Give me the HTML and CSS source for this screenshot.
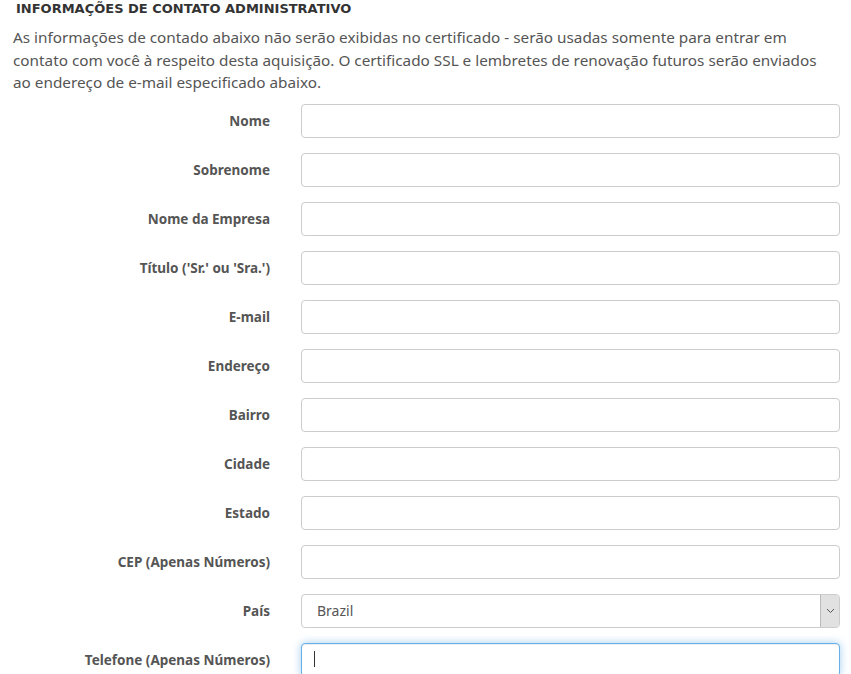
FILE: index.html
```html
<!DOCTYPE html>
<html lang="pt-BR">
<head>
    <meta charset="UTF-8">
    <meta name="viewport" content="width=device-width, initial-scale=1.0">
    <title>Informações de contato administrativo</title>
    <link rel="stylesheet" href="styles.css">
</head>
<body>
    <div class="container">
        <h3 class="section-title">Informações de contato administrativo</h3>
        <p class="section-info">As informações de contado abaixo não serão exibidas no certificado - serão usadas somente para entrar em contato com você à respeito desta aquisição. O certificado SSL e lembretes de renovação futuros serão enviados ao endereço de e-mail especificado abaixo.</p>

        <form class="contact-form">
            <div class="form-row">
                <label for="firstName">Nome</label>
                <input type="text" id="firstName" name="firstName">
            </div>
            <div class="form-row">
                <label for="lastName">Sobrenome</label>
                <input type="text" id="lastName" name="lastName">
            </div>
            <div class="form-row">
                <label for="company">Nome da Empresa</label>
                <input type="text" id="company" name="company">
            </div>
            <div class="form-row">
                <label for="title">Título ('Sr.' ou 'Sra.')</label>
                <input type="text" id="title" name="title">
            </div>
            <div class="form-row">
                <label for="email">E-mail</label>
                <input type="email" id="email" name="email">
            </div>
            <div class="form-row">
                <label for="address">Endereço</label>
                <input type="text" id="address" name="address">
            </div>
            <div class="form-row">
                <label for="district">Bairro</label>
                <input type="text" id="district" name="district">
            </div>
            <div class="form-row">
                <label for="city">Cidade</label>
                <input type="text" id="city" name="city">
            </div>
            <div class="form-row">
                <label for="state">Estado</label>
                <input type="text" id="state" name="state">
            </div>
            <div class="form-row">
                <label for="zip">CEP (Apenas Números)</label>
                <input type="text" id="zip" name="zip">
            </div>
            <div class="form-row">
                <label for="country">País</label>
                <div class="select-wrap">
                    <select id="country" name="country">
                        <option value="BR" selected>Brazil</option>
                    </select>
                    <span class="select-arrow">
                        <svg width="9" height="6" viewBox="0 0 9 6"><path d="M1 1l3.5 3.5L8 1" fill="none" stroke="#555" stroke-width="1"/></svg>
                    </span>
                </div>
            </div>
            <div class="form-row">
                <label for="phone">Telefone (Apenas Números)</label>
                <div class="input-wrap">
                    <input type="text" id="phone" name="phone" class="is-focused">
                    <span class="caret"></span>
                </div>
            </div>
        </form>
    </div>
</body>
</html>
```

FILE: styles.css
```css
* {
    margin: 0;
    padding: 0;
    box-sizing: border-box;
}

body {
    font-family: 'Noto Sans', 'Open Sans', sans-serif;
    background: #ffffff;
    color: #555555;
}

.container {
    padding: 0 11px 0 13px;
}

.section-title {
    margin: 0 0 9px 3px;
    font-family: 'DejaVu Sans', 'Noto Sans', sans-serif;
    font-size: 13px;
    line-height: 17px;
    font-weight: 700;
    text-transform: uppercase;
    color: #333333;
}

.section-info {
    padding-right: 14px;
    font-size: 15.3px;
    line-height: 22.5px;
    color: #555555;
    margin-bottom: 10px;
}

.form-row {
    display: flex;
    align-items: center;
    gap: 31px;
    margin-bottom: 15px;
}

.form-row label {
    width: 257px;
    flex-shrink: 0;
    text-align: right;
    font-size: 13.5px;
    font-weight: 700;
    color: #555555;
}

.form-row input,
.form-row select {
    width: 100%;
    height: 34px;
    padding: 6px 15px;
    border: 1px solid #cccccc;
    border-radius: 4px;
    background: #ffffff;
    font-family: inherit;
    font-size: 14px;
    color: #555555;
}

.form-row input:focus,
.form-row select:focus {
    outline: none;
}

.select-wrap,
.input-wrap {
    position: relative;
    flex: 1;
}

.form-row select {
    appearance: none;
    -webkit-appearance: none;
}

.select-arrow {
    position: absolute;
    top: 1px;
    right: 1px;
    width: 19px;
    height: 32px;
    display: flex;
    align-items: center;
    justify-content: center;
    background: #e1e1e1;
    border-left: 1px solid #bbbbbb;
    border-radius: 0 3px 3px 0;
    pointer-events: none;
}

.form-row input.is-focused {
    border-color: #66afe9;
    box-shadow: inset 0 1px 1px rgba(0, 0, 0, 0.075), 0 0 8px rgba(102, 175, 233, 0.6);
}

.caret {
    position: absolute;
    left: 13px;
    top: 8px;
    width: 1px;
    height: 16px;
    background: #333333;
}
```
